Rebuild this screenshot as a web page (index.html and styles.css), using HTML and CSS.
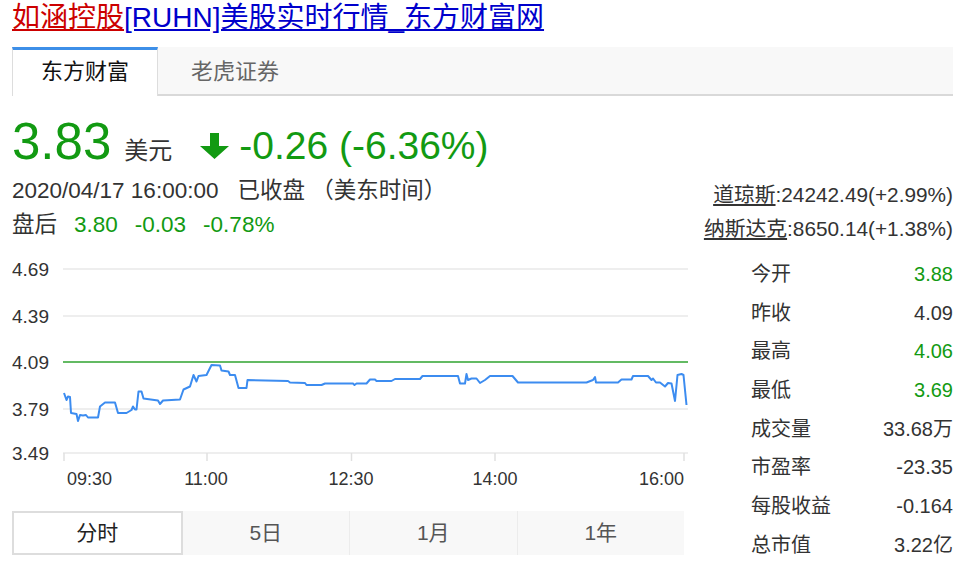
FILE: index.html
```html
<!DOCTYPE html>
<html lang="zh-CN">
<head>
<meta charset="utf-8">
<title>如涵控股[RUHN]美股实时行情_东方财富网</title>
<link rel="stylesheet" href="styles.css">
</head>
<body>
<div class="page">
  <h1 class="title"><a class="title-red" href="#">如涵控股</a><a class="title-blue" href="#">[RUHN]美股实时行情_东方财富网</a></h1>

  <div class="tabs">
    <div class="tab active">东方财富</div>
    <div class="tab">老虎证券</div>
  </div>

  <div class="price-row">
    <span class="price">3.83</span>
    <span class="unit">美元</span>
    <svg class="arrow" viewBox="0 0 29 26" aria-hidden="true">
      <polygon points="10,0 19,0 19,13 29,13 14.5,26 0,13 10,13" fill="#129a12"/>
    </svg>
    <span class="change">-0.26 (-6.36%)</span>
  </div>

  <div class="info-row">
    <div class="info-left">
      <div class="line"><span>2020/04/17 16:00:00</span><span class="status">已收盘 （美东时间）</span></div>
      <div class="line after"><span>盘后</span><span class="green">3.80</span><span class="green">-0.03</span><span class="green">-0.78%</span></div>
    </div>
    <div class="info-right">
      <div class="line"><a class="idx" href="#">道琼斯</a>:24242.49(+2.99%)</div>
      <div class="line"><a class="idx" href="#">纳斯达克</a>:8650.14(+1.38%)</div>
    </div>
  </div>

  <div class="main">
    <div class="chart-col">
      <svg class="chart" width="680" height="245" viewBox="12 255 680 245">
        <g class="grid">
          <line x1="63" y1="269" x2="688" y2="269"/>
          <line x1="63" y1="316" x2="688" y2="316"/>
          <line x1="63" y1="409" x2="688" y2="409"/>
          <line x1="63" y1="453" x2="688" y2="453"/>
        </g>
        <g class="ticks">
          <line x1="64" y1="453" x2="64" y2="461"/>
          <line x1="207" y1="453" x2="207" y2="461"/>
          <line x1="351.5" y1="453" x2="351.5" y2="461"/>
          <line x1="495" y1="453" x2="495" y2="461"/>
          <line x1="684" y1="453" x2="684" y2="461"/>
        </g>
        <line class="preclose" x1="63" y1="362" x2="688" y2="362"/>
        <polyline class="price-line" points="64,393 66.5,400 68,396.5 70,397 71,413 76.5,414 78,421 80,415 83,415.5 86,415 88,417.5 98,417.5 100,406.5 105,402.5 115,402.5 118,413 126.5,413 131.5,410 133,406.5 135,409.5 136.5,409.5 138.5,391.5 141.5,391.5 143.5,398.5 158,400.5 160,404 163,400.5 180,399.5 183.5,389.5 190,386.5 193.5,375 196.5,381.5 198.5,376 206.5,375 211.5,365 220,365.5 221.5,370.5 228.5,371.5 230,375 235,375 238.5,388 246.5,388 247.5,380 288,381 290,382.5 305,383 306.5,385 321.5,385 325,383.5 353,383.5 354.5,385 356.5,383.5 366.5,383.5 370,379.5 375,379.5 376.5,381 391.5,381 395,379 420,379 422.5,376 458,376 460,383.5 465,383.5 466.5,374 468,380 471.5,378.5 476.5,378.5 480,383 485,380 490,376 512.5,376 518,382.5 586.5,382.5 593,380 595,377 596,382.5 618,382.5 621.5,379.5 631.5,379.5 633,376 648,376 651.5,380 653,378.5 656,382.5 660,382.5 665,386.5 668,383 671.5,383.5 675,401 677.5,375 681.5,374 683.5,375 686.5,405"/>
        <g class="ylab">
          <text x="12" y="275.5">4.69</text>
          <text x="12" y="322.5">4.39</text>
          <text x="12" y="368.5">4.09</text>
          <text x="12" y="415.5">3.79</text>
          <text x="12" y="459.5">3.49</text>
        </g>
        <g class="xlab">
          <text x="67" y="484.5">09:30</text>
          <text x="206" y="484.5" text-anchor="middle">11:00</text>
          <text x="351" y="484.5" text-anchor="middle">12:30</text>
          <text x="495" y="484.5" text-anchor="middle">14:00</text>
          <text x="684" y="484.5" text-anchor="end">16:00</text>
        </g>
      </svg>
      <div class="periods">
        <div class="period active">分时</div>
        <div class="period">5日</div>
        <div class="period sep">1月</div>
        <div class="period sep">1年</div>
      </div>
    </div>

    <div class="stats">
      <div class="stat"><span>今开</span><span class="green">3.88</span></div>
      <div class="stat"><span>昨收</span><span>4.09</span></div>
      <div class="stat"><span>最高</span><span class="green">4.06</span></div>
      <div class="stat"><span>最低</span><span class="green">3.69</span></div>
      <div class="stat"><span>成交量</span><span>33.68万</span></div>
      <div class="stat"><span>市盈率</span><span>-23.35</span></div>
      <div class="stat"><span>每股收益</span><span>-0.164</span></div>
      <div class="stat"><span>总市值</span><span>3.22亿</span></div>
    </div>
  </div>
</div>
</body>
</html>
```

FILE: styles.css
```css
* { box-sizing: border-box; }

body {
  margin: 0;
  background: #fff;
  color: #333;
  font-family: "Liberation Sans", "Noto Sans CJK SC", sans-serif;
}

.page {
  width: 961px;
  padding: 0 8px 0 12px;
}

.title {
  margin: 0;
  font-size: 28px;
  line-height: 36px;
  font-weight: normal;
  white-space: nowrap;
}
.title a { text-decoration: underline; }
.title-red { color: #c00; }
.title-blue { color: #0000cc; }

.tabs {
  display: flex;
  margin-top: 11px;
  height: 49px;
  background: #f8f8f8;
  border-bottom: 2px solid #d9d9d9;
}
.tab {
  font-size: 22px;
  line-height: 44px;
  color: #666;
  border-top: 3px solid transparent;
  padding: 0 28px 0 33px;
}
.tab.active {
  width: 146px;
  height: 49px;
  margin-bottom: -2px;
  padding: 0;
  text-align: center;
  background: #fff;
  color: #111;
  border-top: 3px solid #3d8fe8;
  border-left: 1px solid #ddd;
  border-right: 1px solid #ddd;
}

.green { color: #129a12; }

.price-row {
  display: flex;
  align-items: baseline;
  margin-top: 18px;
  height: 56px;
}
.price {
  font-size: 51px;
  line-height: 56px;
  color: #129a12;
}
.unit {
  font-size: 24px;
  margin-left: 13px;
  color: #333;
}
.arrow {
  width: 29px;
  height: 26px;
  margin-left: 28px;
}
.change {
  font-size: 39px;
  margin-left: 10px;
  color: #129a12;
}

.info-row {
  display: flex;
  justify-content: space-between;
  margin-top: 4px;
}
.info-left .line {
  display: flex;
  font-size: 22.5px;
  line-height: 34px;
  color: #333;
}
.info-left .status { margin-left: 19px; }
.info-left .after { gap: 17px; }

.info-right {
  padding-top: 4px;
  text-align: right;
  font-size: 20.8px;
  color: #333;
}
.info-right .line { line-height: 34px; }
.idx { color: #333; text-decoration: underline; }

.main {
  display: flex;
  margin-top: 9px;
}
.chart-col { width: 680px; }
.chart { display: block; }

.grid line { stroke: #e8e8e8; stroke-width: 1.6; }
.ticks line { stroke: #e0e0e0; stroke-width: 1.5; }
.preclose { stroke: #63ba63; stroke-width: 2; }
.price-line {
  fill: none;
  stroke: #3c8cf0;
  stroke-width: 2;
  stroke-linejoin: round;
}
.ylab text { font-size: 19px; fill: #333; }
.xlab text { font-size: 18px; fill: #333; }

.periods {
  display: flex;
  margin-top: 11px;
  width: 672px;
  height: 44px;
  background: #f8f8f8;
}
.period {
  flex: 1;
  text-align: center;
  font-size: 21px;
  line-height: 44px;
  color: #555;
}
.period.sep { border-left: 1px solid #ececec; }
.period.active {
  background: #fff;
  border: 2px solid #ddd;
  line-height: 40px;
  color: #222;
}

.stats {
  margin-left: auto;
  width: 202px;
}
.stat {
  display: flex;
  justify-content: space-between;
  height: 38.7px;
  line-height: 38.7px;
  font-size: 20px;
  color: #333;
}
```
